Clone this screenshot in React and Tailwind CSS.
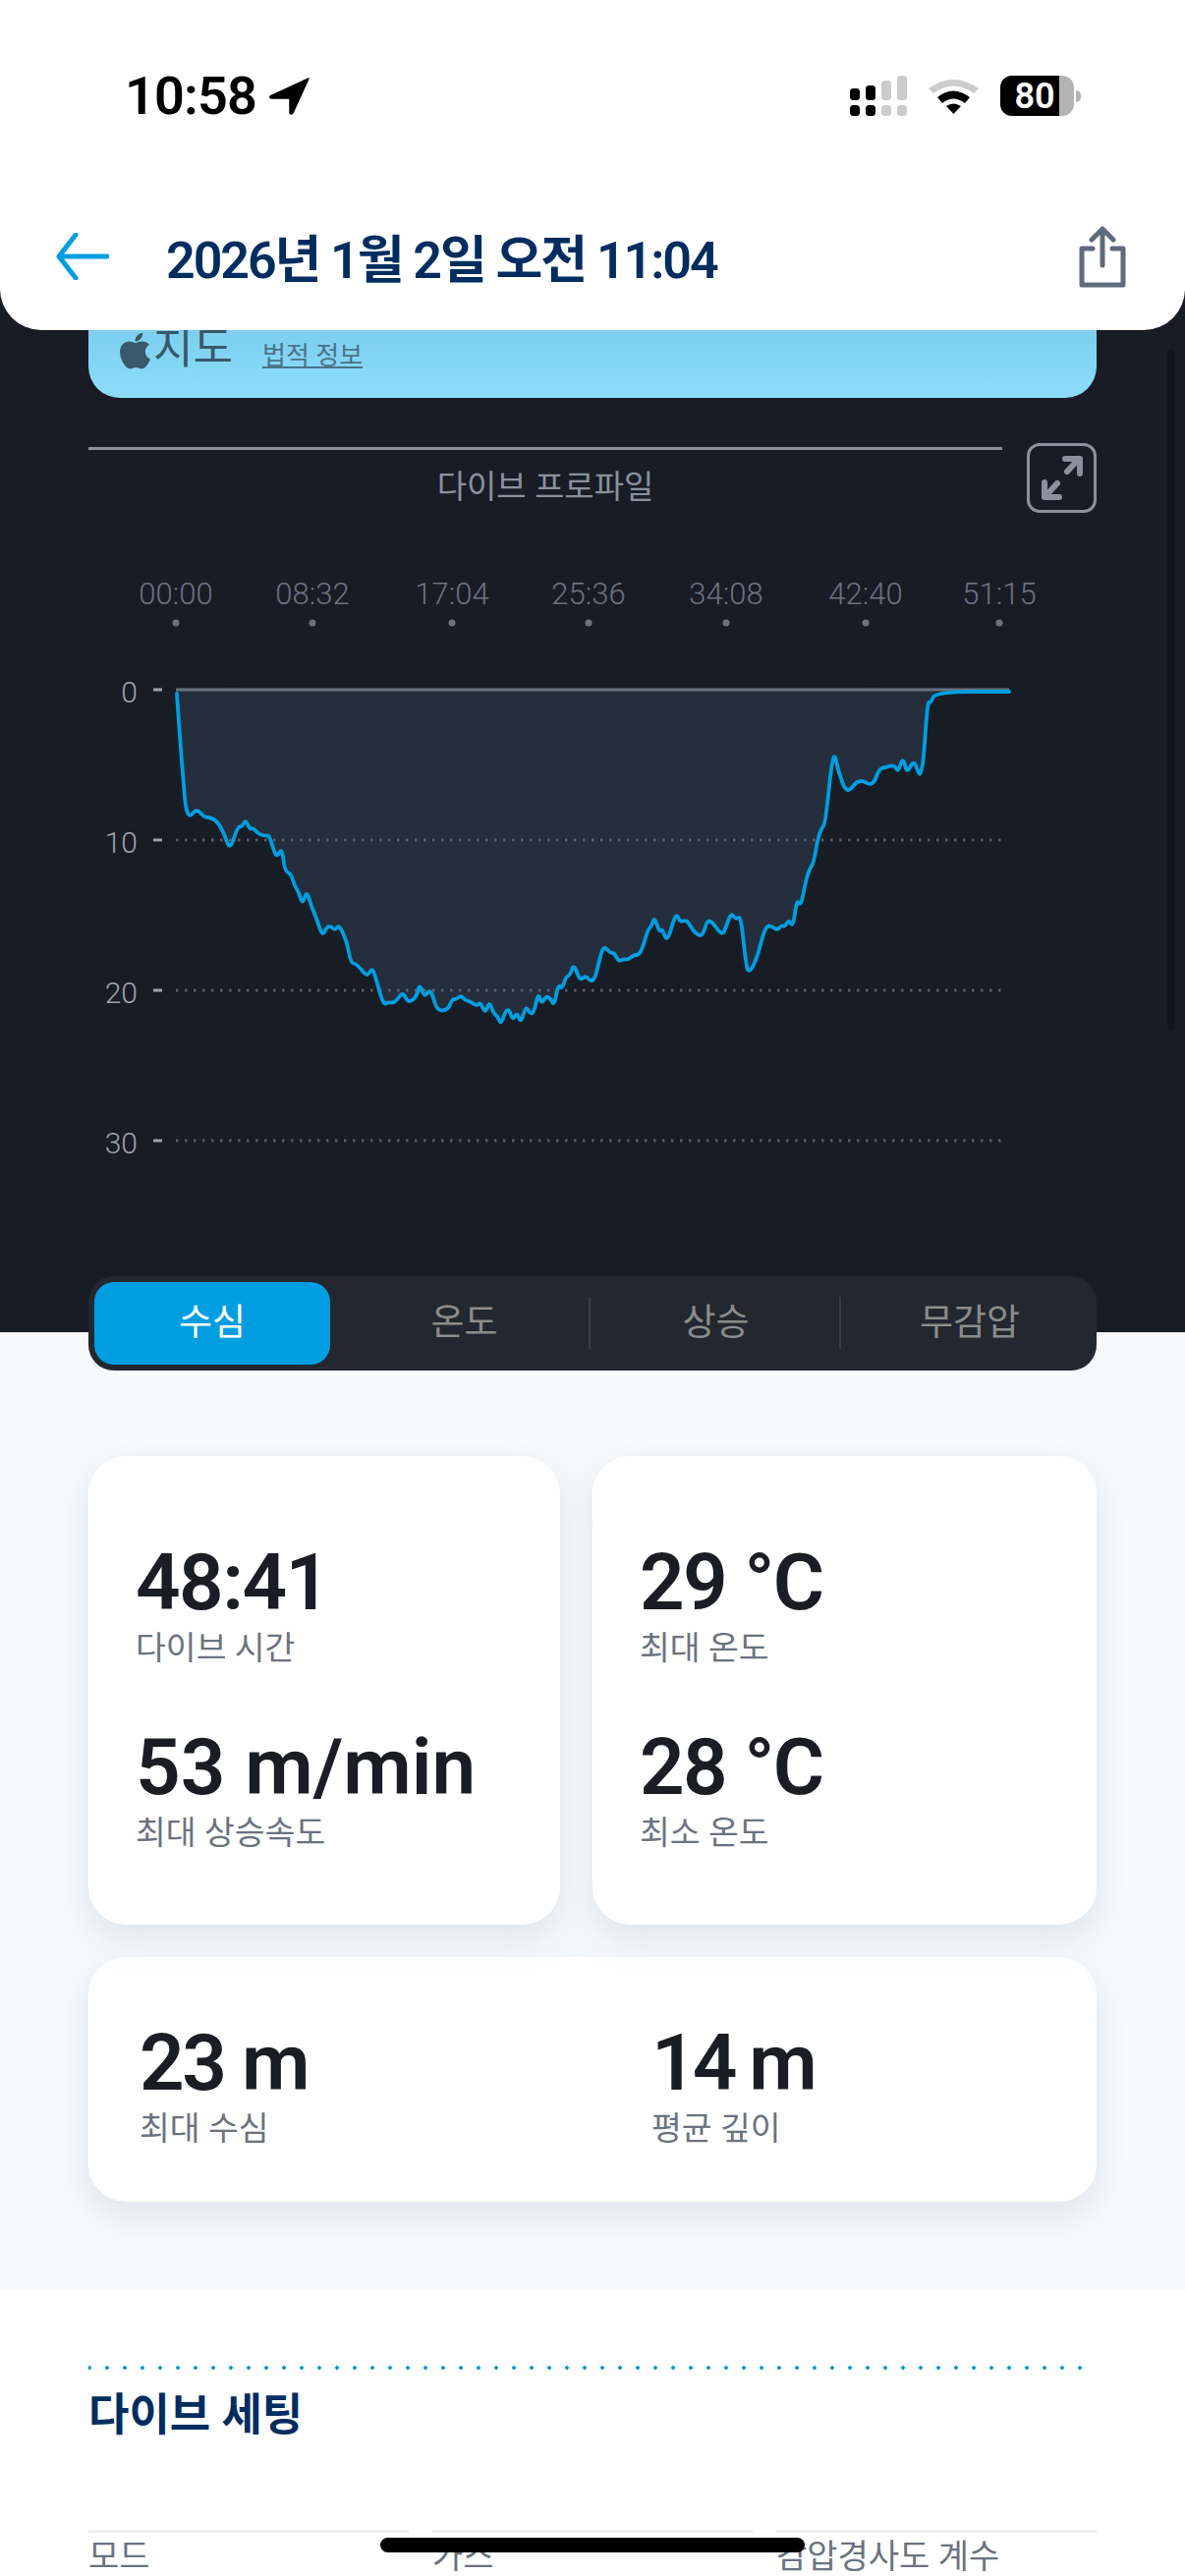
import React from 'react';
import { FaApple } from 'react-icons/fa';

// depth trace, read off the picture as page coordinates
const trace = [
  [180,706],[183,750],[187,800],[189,823],[193,832],[200,823],[208,832],[214,832],[221,836],[228,848],[234,866],[242,841],[246,842],[250,834],[254,844],[258,843],[263,849],[271,851],[274,850],[279,867],[282,872],[287,863],[290,887],[296,889],[300,902],[304,908],[308,921],[312,906],[317,923],[323,937],[328,953],[333,943],[337,943],[341,947],[345,941],[353,958],[357,980],[362,981],[367,986],[374,994],[378,986],[381,990],[390,1023],[395,1020],[402,1021],[410,1009],[415,1021],[424,1015],[427,1001],[432,1015],[437,1008],[440,1012],[445,1029],[456,1028],[460,1017],[465,1017],[469,1013],[473,1018],[478,1019],[485,1024],[489,1020],[494,1032],[498,1019],[502,1031],[506,1034],[510,1043],[514,1030],[518,1027],[522,1039],[526,1030],[530,1042],[535,1024],[539,1031],[543,1032],[548,1010],[551,1022],[556,1014],[560,1016],[564,1024],[568,1002],[572,1007],[576,994],[580,993],[584,981],[589,995],[592,997],[596,993],[601,999],[605,997],[609,982],[614,962],
  [621,970],[625,970],[630,979],[634,976],[639,977],[645,972],[650,972],[654,965],[659,947],[663,943],[666,933],[671,949],[674,945],[679,960],[688,928],[692,939],[699,936],[705,947],[712,953],[716,950],[721,933],[735,953],[739,943],[744,929],[749,936],[754,932],[759,980],[762,991],[770,977],[779,942],[786,943],[791,947],[795,942],[799,943],[803,936],[807,944],[811,915],[815,923],[820,897],[824,884],[828,879],[832,855],[836,843],[840,839],[848,761],[853,785],[862,809],[874,792],[888,801],[895,782],[902,781],[907,779],[911,780],[914,786],[919,770],[923,788],[930,773],[935,788],[937,788],[940,773],[944,714],[947,716],[952,704],[1027,704],
];

const smooth = (pts) => {
  let d = `M${pts[0][0]} ${pts[0][1]}`;
  for (let i = 1; i < pts.length - 1; i++) {
    const mx = (pts[i][0] + pts[i + 1][0]) / 2;
    const my = (pts[i][1] + pts[i + 1][1]) / 2;
    d += ` Q${pts[i][0]} ${pts[i][1]} ${mx} ${my}`;
  }
  const last = pts[pts.length - 1];
  return `${d} L${last[0]} ${last[1]}`;
};

const linePath = smooth(trace);
const areaPath = `${smooth(trace.slice(0, -1))} L952 703 L180 703 Z`;

const times = [
  ['00:00', 179],
  ['08:32', 318],
  ['17:04', 460],
  ['25:36', 599],
  ['34:08', 739],
  ['42:40', 881],
  ['51:15', 1017],
];

const depths = [
  ['0', 702],
  ['10', 855],
  ['20', 1008],
  ['30', 1161],
];

const StatusBar = () => (
  <div className="flex h-[200px] items-start justify-between pl-[127px] pr-[106px] pt-[71px]">
    <div className="flex items-center gap-[13px]">
      <span className="text-[54px] font-semibold leading-[54px] tracking-[-0.015em] text-black">10:58</span>
      <svg className="h-[38px] w-[41px]" viewBox="0 0 41 38">
        <path d="M40 1 L1 19 Q0 21 3 21 L21 21 L21 36 Q22 38 24 36 Z" fill="#000" stroke="#000" strokeWidth="1.5" strokeLinejoin="round" />
      </svg>
    </div>
    <div className="flex items-center pt-[6px]">
      <svg className="h-[41px] w-[58px]" viewBox="0 0 58 41">
        <rect x="0" y="13" width="10" height="12" rx="3.5" fill="#000" />
        <rect x="0" y="30" width="10" height="11" rx="3.5" fill="#000" />
        <rect x="16" y="10" width="10" height="15" rx="3.5" fill="#000" />
        <rect x="16" y="30" width="10" height="11" rx="3.5" fill="#000" />
        <rect x="32" y="5" width="10" height="20" rx="3.5" fill="#ccc" />
        <rect x="32" y="30" width="10" height="11" rx="3.5" fill="#ccc" />
        <rect x="48" y="0" width="10" height="25" rx="3.5" fill="#ccc" />
        <rect x="48" y="30" width="10" height="11" rx="3.5" fill="#ccc" />
      </svg>
      <svg className="ml-[22px] h-[37px] w-[51px]" viewBox="0 0 51 37">
        <path d="M0 11 Q25 -7 51 11 L46 16 Q25 1 5 16 Z" fill="#ccc" />
        <path d="M9 20 Q25 7 42 20 L37 26 Q25 17 14 26 Z" fill="#000" />
        <path d="M18 29 Q25 24 33 29 L25.5 37 Z" fill="#000" />
      </svg>
      <div className="ml-[22px] flex h-[41px] w-[75px] overflow-hidden rounded-[12px] bg-[#b3b3b3]">
        <div className="flex w-[60px] items-center justify-center bg-black pl-[10px] text-[36px] font-semibold leading-none text-white">80</div>
      </div>
      <div className="ml-[2px] h-[12px] w-[5px] rounded-r-full bg-[#b3b3b3]" />
    </div>
  </div>
);

const Header = () => (
  <header className="relative z-10 h-[336px] rounded-b-[42px] bg-white">
    <StatusBar />
    <div className="flex items-center justify-between pl-[57px] pr-[60px] pt-[26px]">
      <div className="flex items-center gap-[58px]">
        <svg className="h-[48px] w-[54px]" viewBox="0 0 54 48" fill="none" stroke="#009ee0" strokeWidth="5" strokeLinecap="round" strokeLinejoin="round">
          <path d="M52 24 H3 M20 2 L3 24 L20 46" />
        </svg>
        <h1 className="pt-[10px] text-[52px] font-semibold leading-[60px] tracking-[-0.04em] text-[#002d5f]">2026년 1월 2일 오전 11:04</h1>
      </div>
      <svg className="h-[63px] w-[48px]" viewBox="0 0 48 63" fill="none" stroke="#5f6b7c" strokeWidth="5" strokeLinecap="round" strokeLinejoin="round">
        <path d="M24 3 V40 M13 14 L24 3 L35 14" />
        <path d="M14 23 H3 V60 H45 V23 H34" />
      </svg>
    </div>
  </header>
);

const ProfileChart = () => (
  <svg className="mt-[58px] block h-[700px] w-[1206px]" viewBox="0 580 1206 700">
    <defs>
      <filter id="glow" x="-10%" y="-10%" width="120%" height="120%">
        <feGaussianBlur stdDeviation="26" />
      </filter>
    </defs>
    {times.map(([label, x]) => (
      <g key={label}>
        <text x={x} y="615" textAnchor="middle" fontSize="31" fontWeight="300" fill="#6b7280">{label}</text>
        <circle cx={x} cy="634" r="3.5" fill="#6b7280" />
      </g>
    ))}
    <path d={areaPath} fill="#1c3038" opacity="0.2" filter="url(#glow)" />
    <path d={areaPath} fill="#242e3c" />
    {depths.map(([label, y]) => (
      <g key={label}>
        <text x="140" y={y + 13} textAnchor="end" fontSize="30" fontWeight="300" fill="#9ca3af">{label}</text>
        <rect x="156" y={y - 1.5} width="9" height="3" fill="#9ca3af" />
        {label !== '0' && (
          <line x1="179" x2="1020" y1={y} y2={y} stroke="#6b7280" strokeOpacity="0.75" strokeWidth="3" strokeDasharray="2.5 6.5" />
        )}
      </g>
    ))}
    <rect x="179" y="700.5" width="848" height="3" fill="#6b7280" />
    <path d={linePath} fill="none" stroke="#009ee0" strokeWidth="3.8" strokeLinejoin="round" strokeLinecap="round" />
  </svg>
);

const Tabs = () => (
  <div className="relative z-10 mx-[90px] -mb-[39px] mt-[19px] flex h-[96px] items-center rounded-[26px] bg-[#23272f] p-[6px] text-[37px]">
    <div className="flex h-[84px] w-[240px] items-center justify-center rounded-[20px] bg-[#009ee0] text-white">수심</div>
    <div className="relative flex h-[84px] w-[265px] items-center justify-center pl-[8px] text-[#8c8c8c]">
      온도
      <span className="absolute right-0 top-[15px] h-[53px] w-[2px] bg-[#393d45]" />
    </div>
    <div className="relative flex h-[84px] w-[255px] items-center justify-center text-[#8c8c8c]">
      상승
      <span className="absolute right-0 top-[15px] h-[53px] w-[2px] bg-[#393d45]" />
    </div>
    <div className="flex h-[84px] flex-1 items-center justify-center pl-[8px] text-[#8c8c8c]">무감압</div>
  </div>
);

const Stat = ({ value, label, className = '', valueClass = '' }) => (
  <div className={className}>
    <div className={`text-[80px] font-semibold leading-[80px] text-[#1a1d23] ${valueClass}`}>{value}</div>
    <div className="mt-[7px] text-[33.5px] leading-[40px] text-[#6b7280]">{label}</div>
  </div>
);

const cardClass = 'rounded-[38px] bg-white shadow-[0_14px_32px_rgba(160,180,205,0.28)]';

const StatCards = () => (
  <section className="bg-[#f7f9fb] px-[90px] pb-[90px] pt-[126px]">
    <div className="grid grid-cols-[480px_1fr] gap-[33px]">
      <div className={`${cardClass} pb-[73px] pl-[48px] pt-[89px]`}>
        <Stat value="48:41" label="다이브 시간" valueClass="tracking-[-0.02em]" />
        <Stat value="53 m/min" label="최대 상승속도" className="mt-[61px]" />
      </div>
      <div className={`${cardClass} pb-[73px] pl-[48px] pt-[89px]`}>
        <Stat value="29 °C" label="최대 온도" valueClass="tracking-[-0.02em]" />
        <Stat value="28 °C" label="최소 온도" className="mt-[61px]" valueClass="tracking-[-0.02em]" />
      </div>
    </div>
    <div className={`${cardClass} mt-[33px] flex pb-[54px] pl-[52px] pt-[68px]`}>
      <Stat value="23 m" label="최대 수심" className="w-[521px]" valueClass="tracking-[-0.03em]" />
      <Stat value="14 m" label="평균 깊이" valueClass="tracking-[-0.05em]" />
    </div>
  </section>
);

const settings = ['모드', '가스', '감압경사도 계수'];

const DiveSettings = () => (
  <section className="bg-white px-[90px] pt-[77px]">
    <div className="h-[4px] w-[1012px] bg-[radial-gradient(circle,#009ee0_1.7px,transparent_2px)] bg-[length:18px_4px] bg-[position:-8px_0]" />
    <h2 className="mt-[17px] text-[45px] font-semibold leading-[60px] text-[#002d5f]">다이브 세팅</h2>
    <div className="mt-[86px] grid grid-cols-3 gap-[24px]">
      {settings.map((name) => (
        <div key={name} className="border-t-[3px] border-[#eeeeee] pt-[3px] text-[34px] leading-[42px] text-[#6b7280]">{name}</div>
      ))}
    </div>
  </section>
);

export default function App() {
  return (
    <div className="relative h-[2622px] w-[1206px] overflow-hidden bg-white font-[Roboto,'Noto_Sans_CJK_KR',sans-serif]">
      <Header />
      <div className="relative -mt-[40px] flow-root bg-[#181c24]">
        <div className="absolute right-[10px] top-[60px] h-[692px] w-[8px] rounded-full bg-[#12151b]" />
        <div className="px-[90px]">
          <div className="flex h-[109px] items-end rounded-b-[32px] bg-gradient-to-b from-[#74c6e8] to-[#8adbf9] to-90% pb-[24px] pl-[29px]">
            <FaApple className="mb-[3px] h-[42px] w-[37px] text-[#37596a]" />
            <span className="text-[44px] leading-[52px] text-[#37596a]">지도</span>
            <span className="mb-[4px] ml-[30px] text-[26px] leading-[30px] text-[#4a7388] underline">법적 정보</span>
          </div>
          <div className="mt-[46px] flex justify-between">
            <div className="w-[930px] pt-[4px]">
              <div className="h-[3px] bg-[#8a919d]" />
              <p className="mt-[17px] text-center text-[33px] leading-[42px] text-[#8a919d]">다이브 프로파일</p>
            </div>
            <button className="flex h-[71px] w-[71px] items-center justify-center rounded-[13px] border-[3px] border-[#8a919d]">
              <svg className="h-[50px] w-[50px]" viewBox="0 0 50 50" fill="none" stroke="#8a919d" strokeWidth="6" strokeLinecap="round" strokeLinejoin="round">
                <path d="M30 18 L42 5 M28 5 H43 V20" />
                <path d="M20 30 L8 43 M7 29 V44 H22" />
              </svg>
            </button>
          </div>
        </div>
        <ProfileChart />
        <Tabs />
      </div>
      <StatCards />
      <DiveSettings />
      <div className="absolute left-[387px] top-[2583px] h-[15px] w-[432px] rounded-full bg-black" />
    </div>
  );
}
